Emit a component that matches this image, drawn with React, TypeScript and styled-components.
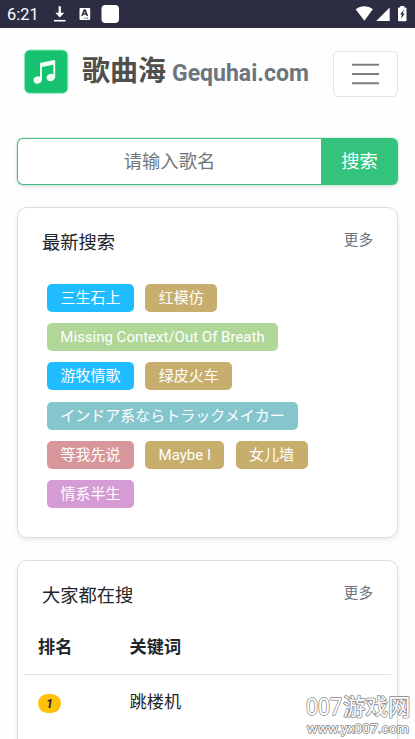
import React from "react";
import styled, { createGlobalStyle } from "styled-components";

const GlobalStyle = createGlobalStyle`
  *, *::before, *::after { box-sizing: border-box; }
  html, body { margin: 0; height: 739px; overflow: hidden; background: #fefefe; }
  body {
    font-family: Roboto, "Noto Sans CJK SC", sans-serif;
    color: #212529;
  }
  button, input { font-family: inherit; margin: 0; }
`;

const Screen = styled.div`
  position: relative;
  width: 415px;
  height: 739px;
  overflow: hidden;
  display: flex;
  flex-direction: column;
`;

const StatusBar = styled.div`
  flex: none;
  height: 28px;
  padding: 0 8px 0 7px;
  display: flex;
  align-items: center;
  justify-content: space-between;
  background: #2c2d42;
  color: #fff;
`;

const StatusGroup = styled.div`
  display: flex;
  align-items: center;
`;

const Clock = styled.span`
  width: 46px;
  font-size: 16.4px;
  line-height: 28px;
  padding-top: 1px;
`;

const Header = styled.header`
  flex: none;
  height: 110px;
  padding: 21px 17px 0 23px;
  display: flex;
  align-items: flex-start;
`;

const Logo = styled.svg`
  flex: none;
`;

const Brand = styled.div`
  margin-left: 13px;
  padding-top: 1px;
  flex: 1;
  display: flex;
  align-items: baseline;
  white-space: nowrap;
  line-height: 44px;
`;

const BrandName = styled.span`
  font-size: 28px;
  font-weight: 700;
  color: #4f4f4b;
`;

const BrandDomain = styled.span`
  margin-left: 6px;
  font-size: 23px;
  font-weight: 700;
  color: #6c757d;
`;

const MenuButton = styled.button`
  flex: none;
  width: 65px;
  height: 46px;
  margin-top: 2px;
  padding: 0;
  display: flex;
  align-items: center;
  justify-content: center;
  background: #fff;
  border: 1px solid #e2e3e4;
  border-radius: 5px;
`;

const SearchBar = styled.form`
  flex: none;
  display: flex;
  height: 47px;
  margin: 0 17px 22px;
  border-radius: 6px;
  box-shadow: 0 2px 4px rgba(0, 0, 0, 0.08), 0 0 2px rgba(51, 195, 125, 0.5);
`;

const SearchInput = styled.input`
  flex: 1;
  min-width: 0;
  padding: 0;
  border: 1.5px solid #46ba82;
  border-right: 0;
  border-radius: 6px 0 0 6px;
  background: #fff;
  font-size: 18.3px;
  text-align: center;
  outline: none;
  &::placeholder { color: #70777e; opacity: 1; }
`;

const SearchButton = styled.button`
  flex: none;
  width: 77px;
  padding: 0 0 3px;
  border: 0;
  border-radius: 0 6px 6px 0;
  background: #33c37d;
  color: #fff;
  font-size: 18.3px;
`;

const Card = styled.section<{ $height: number }>`
  flex: none;
  height: ${(p) => p.$height}px;
  margin: 0 17px 22px;
  border: 1px solid #dcdddd;
  border-radius: 10px;
  background: #fff;
  box-shadow: 0 2px 5px rgba(0, 0, 0, 0.08);
`;

const CardHeader = styled.div`
  height: 67px;
  padding: 21px 24px 0;
  display: flex;
  justify-content: space-between;
`;

const CardTitle = styled.h2`
  margin: 0;
  font-size: 18.3px;
  line-height: 27px;
  font-weight: 400;
`;

const MoreLink = styled.a`
  font-size: 14.6px;
  line-height: 22px;
  color: #6c757d;
`;

const Tags = styled.div`
  display: flex;
  flex-wrap: wrap;
  gap: 11.2px 11.3px;
  padding: 9px 60px 0 29px;
`;

const Tag = styled.span<{ $color: string; $width: number }>`
  flex: none;
  width: ${(p) => p.$width}px;
  height: 28px;
  border-radius: 5px;
  background: ${(p) => p.$color};
  color: #fff;
  font-size: 15px;
  line-height: 29px;
  text-align: center;
  white-space: nowrap;
`;

const Ranking = styled.div`
  margin: 0 6px;
`;

const RankRow = styled.div<{ $head?: boolean }>`
  display: grid;
  grid-template-columns: 91.5px 1fr;
  align-items: center;
  height: ${(p) => (p.$head ? 47 : 56)}px;
  padding: 0 14px ${(p) => (p.$head ? 9 : 3)}px;
  border-bottom: ${(p) => (p.$head ? "1.5px solid #dee2e2" : "0")};
  font-size: 17.2px;
  font-weight: ${(p) => (p.$head ? 700 : 400)};
  line-height: 26px;
`;

const Badge = styled.span`
  display: block;
  width: 23px;
  height: 19px;
  margin-top: 4px;
  border-radius: 10px;
  background: #ffc10a;
  color: #212529;
  font-size: 12.5px;
  font-style: italic;
  font-weight: 700;
  line-height: 19px;
  text-align: center;
`;

const Watermark = styled.div`
  position: absolute;
  right: 0;
  bottom: 0;
  width: 112px;
  height: 49px;
`;

const MarkText = styled.text`
  font-family: Roboto, "Noto Sans CJK SC", sans-serif;
  fill: #fff;
  stroke: #858585;
  paint-order: stroke;
  stroke-linejoin: round;
`;

const tags = [
  { text: "三生石上", color: "#1fbdff", width: 87 },
  { text: "红模仿", color: "#c8ae6d", width: 72 },
  { text: "Missing Context/Out Of Breath", color: "#b0d798", width: 231 },
  { text: "游牧情歌", color: "#1fbdff", width: 87 },
  { text: "绿皮火车", color: "#c8ae6d", width: 87 },
  { text: "インドア系ならトラックメイカー", color: "#85c6cd", width: 251 },
  { text: "等我先说", color: "#d7979a", width: 87 },
  { text: "Maybe I", color: "#c8ae6d", width: 79 },
  { text: "女儿墙", color: "#c8ae6d", width: 72 },
  { text: "情系半生", color: "#d59bd5", width: 87 },
];

export default function App() {
  return (
    <Screen>
      <GlobalStyle />
      <StatusBar>
        <StatusGroup>
          <Clock>6:21</Clock>
          <svg width="68" height="28" viewBox="0 0 68 28">
            <path d="M5.600 6.200h2.300v6.500h3.300L6.800 17.500 2.300 12.700h3.300z" fill="#fff" />
            <path d="M1 20.700h11.500" stroke="#fff" strokeWidth="1.600" />
            <rect x="26.500" y="8" width="10.700" height="12" rx="1" fill="#fff" />
            <path d="m29 16 2.300-6h.8l2.300 6M30 14h3.500" fill="none" stroke="#2c2d42" strokeWidth="1.500" />
            <path d="M31.500 18.200h1.200m1.200 0h1.200" stroke="#2c2d42" />
            <rect x="48.500" y="5" width="17.500" height="18" rx="4" fill="#fff" />
          </svg>
        </StatusGroup>
        <svg width="52" height="28" viewBox="0 0 52 28">
          <path d="M.7 9.200C5.700 5.100 13.100 5.100 17.900 9.200L9.300 20.800z" fill="#fff" />
          <path d="M34.700 7.500V21H21.200z" fill="#fff" />
          <path d="M45.200 6h4v1.500H50.500q1 0 1 1v11.800q0 1-1 1h-6.500q-1 0-1-1V8.500q0-1 1-1h1.200z" fill="#fff" />
          <path d="M48.900 9.500 45.200 14.400h1.700l-.9 4.300 3.700-5.300h-1.800z" fill="#2c2d42" />
        </svg>
      </StatusBar>

      <Header>
        <Logo width="46" height="46" viewBox="0 0 46 46">
          <rect x="1.500" y="1" width="43.300" height="43.300" rx="5.500" fill="#16c26f" stroke="#92e7bd" strokeWidth="1" />
          <g fill="#effff5">
            <ellipse cx="14.600" cy="31" rx="4.200" ry="3.500" transform="rotate(-15 14.600 31)" />
            <ellipse cx="27.700" cy="28.500" rx="4.200" ry="3.500" transform="rotate(-15 27.700 28.500)" />
            <path d="M17 14.800q0-.9.900-1.100l13-2.700q1.300-.2 1.300 1v16.500h-1.900V15.700L18.900 18.100V31H17z" />
          </g>
        </Logo>
        <Brand>
          <BrandName>歌曲海</BrandName>
          <BrandDomain>Gequhai.com</BrandDomain>
        </Brand>
        <MenuButton type="button" aria-label="菜单">
          <svg width="29" height="24" viewBox="0 0 29 24">
            <path d="M1 2.700h27M1 12h27M1 21.200h27" stroke="#7d7d7d" strokeWidth="2" />
          </svg>
        </MenuButton>
      </Header>

      <SearchBar onSubmit={(e: React.FormEvent) => e.preventDefault()}>
        <SearchInput placeholder="请输入歌名" />
        <SearchButton type="submit">搜索</SearchButton>
      </SearchBar>

      <Card $height={331}>
        <CardHeader>
          <CardTitle>最新搜索</CardTitle>
          <MoreLink>更多</MoreLink>
        </CardHeader>
        <Tags>
          {tags.map((t) => (
            <Tag key={t.text} $color={t.color} $width={t.width}>{t.text}</Tag>
          ))}
        </Tags>
      </Card>

      <Card $height={400}>
        <CardHeader>
          <CardTitle>大家都在搜</CardTitle>
          <MoreLink>更多</MoreLink>
        </CardHeader>
        <Ranking>
          <RankRow $head>
            <span>排名</span>
            <span>关键词</span>
          </RankRow>
          <RankRow>
            <Badge>1</Badge>
            <span>跳楼机</span>
          </RankRow>
        </Ranking>
      </Card>

      <Watermark>
        <svg width="112" height="49" viewBox="0 0 112 49">
          <MarkText x="3" y="25" fontSize="23" strokeWidth="1.500" textLength="36" lengthAdjust="spacingAndGlyphs">007</MarkText>
          <MarkText x="40" y="25" fontSize="22.500" strokeWidth="1.500">游戏网</MarkText>
          <MarkText x="4" y="42.500" fontSize="13" strokeWidth="1.500" textLength="102" lengthAdjust="spacingAndGlyphs">www.yx007.com</MarkText>
        </svg>
      </Watermark>
    </Screen>
  );
}
